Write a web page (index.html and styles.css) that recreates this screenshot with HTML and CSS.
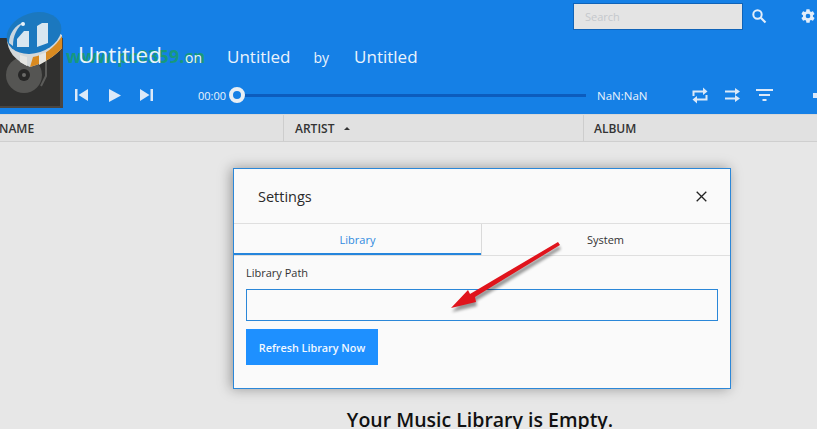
FILE: index.html
```html
<!DOCTYPE html>
<html lang="en">
<head>
    <meta charset="UTF-8">
    <meta name="viewport" content="width=device-width, initial-scale=1.0">
    <title>Music Library</title>
    <link rel="stylesheet" href="styles.css">
</head>
<body>
    <header class="player">
        <div class="top-bar">
            <div class="search-box">Search</div>
            <svg class="search-icon" width="16" height="16" viewBox="0 0 16 16"><circle cx="6.5" cy="6.5" r="4.2" fill="none" stroke="#e4eefa" stroke-width="2"/><path d="M9.8 9.8L14.5 14.5" stroke="#e4eefa" stroke-width="2.2"/></svg>
            <svg class="gear-icon" width="16" height="16" viewBox="0 0 24 24"><path fill="#e4eefa" fill-rule="evenodd" d="M19.4 13c.04-.3.06-.65.06-1s-.02-.7-.07-1l2.1-1.65c.2-.15.25-.42.13-.64l-2-3.46c-.12-.22-.4-.3-.6-.22l-2.5 1c-.52-.4-1.08-.73-1.7-.98l-.37-2.65A.5.5 0 0 0 14 2h-4a.5.5 0 0 0-.5.42l-.37 2.65c-.62.25-1.18.58-1.7.98l-2.5-1c-.22-.08-.48 0-.6.22l-2 3.46c-.13.22-.07.49.12.64L4.6 11c-.05.3-.1.65-.1 1s.03.7.08 1l-2.1 1.65c-.2.15-.25.42-.13.64l2 3.46c.12.22.4.3.6.22l2.5-1c.52.4 1.08.73 1.7.98l.37 2.65c.05.24.25.4.5.4h4c.25 0 .45-.16.5-.42l.37-2.65c.62-.25 1.18-.58 1.7-.98l2.5 1c.22.08.48 0 .6-.22l2-3.46c.12-.22.07-.49-.12-.64L19.4 13zM12 15.5a3.5 3.5 0 1 1 0-7 3.5 3.5 0 0 1 0 7z"/></svg>
        </div>
        <div class="now-playing">
            <div class="album-art">
                <svg width="63" height="70" viewBox="0 0 63 70">
                    <rect width="63" height="70" fill="#30302f"/>
                    <path d="M60 0H63V70H0V68H60z" fill="#4a4540"/>
                    <circle cx="24" cy="37" r="18" fill="#555553"/>
                    <circle cx="24" cy="37" r="6" fill="#262626"/>
                    <circle cx="24" cy="37" r="2" fill="#6a6a68"/>
                    <path d="M46 18V38L41 48" fill="none" stroke="#5c5c5a" stroke-width="2"/>
                </svg>
            </div>
            <div class="track-info">
                <div class="titles">
                    <span class="song-title">Untitled</span>
                    <span class="joiner joiner-on">on</span>
                    <span class="sub-title">Untitled</span>
                    <span class="joiner joiner-by">by</span>
                    <span class="sub-title">Untitled</span>
                </div>
                <div class="controls">
                    <svg class="ctl-prev" width="13" height="12" viewBox="0 0 13 12"><path fill="#dce9f8" d="M0 0H2.5V12H0zM13 0V12L3.5 6z"/></svg>
                    <svg class="ctl-play" width="12" height="13" viewBox="0 0 12 13"><path fill="#dce9f8" d="M0 0L12 6.5 0 13z"/></svg>
                    <svg class="ctl-next" width="13" height="12" viewBox="0 0 13 12"><path fill="#dce9f8" d="M13 0H10.5V12H13zM0 0V12L9.5 6z"/></svg>
                    <span class="time time-now">00:00</span>
                    <div class="seek">
                        <div class="seek-knob"></div>
                        <div class="seek-track"></div>
                    </div>
                    <span class="time time-end">NaN:NaN</span>
                    <svg class="ctl-repeat" width="16" height="17" viewBox="0 0 16 17"><path fill="none" stroke="#dce9f8" stroke-width="2" d="M1.5 9V4.5H11M14.5 8V12.5H5"/><path fill="#dce9f8" d="M11 0.5L15.5 4.5 11 8zM5 9L0.5 12.5 5 16.500z"/></svg>
                    <svg class="ctl-shuffle" width="15" height="14" viewBox="0 0 15 14"><path fill="none" stroke="#dce9f8" stroke-width="2" d="M0 3.500H11M0 10.500H11"/><path fill="#dce9f8" d="M10 0L15 3.500 10 7zM10 7L15 10.500 10 14z"/></svg>
                    <svg class="ctl-filter" width="17" height="12" viewBox="0 0 17 12"><path fill="none" stroke="#dce9f8" stroke-width="2" d="M0 1H17M3 6H14M6.500 11H10.500"/></svg>
                    <div class="volume-dot"></div>
                </div>
            </div>
        </div>
    </header>

    <div class="col-header">
        <div class="col col-name">NAME</div>
        <div class="col col-artist">ARTIST <span class="sort-caret"></span></div>
        <div class="col col-album">ALBUM</div>
    </div>

    <main class="library">
        <p class="empty-msg">Your Music Library is Empty.</p>
    </main>

    <div class="modal">
        <div class="modal-head">
            <span class="modal-title">Settings</span>
            <svg width="11" height="11" viewBox="0 0 11 11"><path d="M.7.7L10.300 10.300M10.300.7L.7 10.300" stroke="#222" stroke-width="1.300"/></svg>
        </div>
        <div class="tabs">
            <div class="tab tab-active">Library</div>
            <div class="tab">System</div>
        </div>
        <div class="modal-body">
            <label class="field-label">Library Path</label>
            <div class="path-input"></div>
            <button class="refresh-button">Refresh Library Now</button>
        </div>
    </div>

    <!-- annotation arrow -->
    <svg class="arrow" width="817" height="429" viewBox="0 0 817 429">
        <defs>
            <filter id="arrow-blur" x="-10%" y="-10%" width="120%" height="120%"><feGaussianBlur stdDeviation="1.500"/></filter>
        </defs>
        <path d="M451 308L468 290 470 294 558 242 560 245 475 297 476 302z" fill="#000" opacity=".4" filter="url(#arrow-blur)" transform="translate(1 4)"/>
        <path d="M451 308L468 290 470 294 558 242 560 245 475 297 476 302z" fill="#e0141c"/>
    </svg>

    <!-- site watermark over the player -->
    <svg class="wm-logo" width="60" height="62" viewBox="0 0 60 62">
        <path d="M2 27C2 40 10 50 25 56 40 52 50 45 57 37V24L30 8z" fill="#d3d8da"/>
        <path d="M28 46C40 44 50 36 57 25V37C50 45 40 52 25 56z" fill="#d98a20"/>
        <path d="M34 44L41 41V50L34 54zM15 44L22 46V55L15 51z" fill="#e6e6e2"/>
        <ellipse cx="29" cy="22" rx="28" ry="20" transform="rotate(-18 29 22)" fill="#1b78bf"/>
        <path d="M4 32C4 23 10 14 19 11 12 17 8 24 8 35z" fill="#c9d6e0"/>
        <path d="M12 28L19 20H24V36L12 36zM32 15L37 12H43V32L32 36z" fill="#d8e6f0"/>
        <circle cx="18" cy="13" r="2" fill="#e8f2fa"/>
    </svg>
    <span class="wm-text">www.pc0359.cn</span>
</body>
</html>
```

FILE: styles.css
```css
html, body {
    margin: 0;
    height: 100%;
}
body {
    position: relative;
    overflow: hidden;
    background: #e7e7e7;
    font-family: "Open Sans", "Noto Sans", sans-serif;
    color: #222;
}
.player {
    height: 114px;
    background: #1580e6;
    color: #eaf3fc;
    display: flex;
    flex-direction: column;
}
.top-bar {
    height: 38px;
    display: flex;
    align-items: flex-start;
    justify-content: flex-end;
}
.search-box {
    width: 157px;
    height: 25px;
    margin-top: 3px;
    padding-left: 11px;
    background: #e4e4e4;
    border: 1px solid #0f63b8;
    color: #c4c8cc;
    font-size: 11px;
    line-height: 25px;
}
.search-icon {
    margin: 8px 0 0 8px;
}
.gear-icon {
    margin: 8px 1px 0 33px;
}
.now-playing {
    display: flex;
}
.album-art {
    width: 63px;
    height: 70px;
}
.track-info {
    flex: 1;
    min-width: 0;
}
.titles {
    position: relative;
    z-index: 1;
    height: 43px;
    padding-left: 15px;
    display: flex;
    align-items: baseline;
    white-space: nowrap;
}
.song-title {
    font-size: 22.5px;
    line-height: 34px;
}
.sub-title {
    font-size: 17px;
}
.joiner {
    font-size: 14px;
}
.joiner-on {
    margin: 0 25px 0 23px;
}
.joiner-by {
    margin: 0 25px 0 23px;
}
.controls {
    height: 28px;
    display: flex;
    align-items: center;
    padding-left: 12px;
}
.controls > * {
    flex-shrink: 0;
}
.ctl-play {
    margin-left: 21px;
}
.ctl-next {
    margin-left: 19px;
}
.time {
    font-size: 11px;
}
.time-now {
    margin-left: 45px;
}
.seek {
    display: flex;
    align-items: center;
    width: 357px;
    margin-left: 3px;
}
.seek-knob {
    width: 8px;
    height: 8px;
    border: 4px solid #e8eef4;
    border-radius: 50%;
    background: #1580e6;
    flex: none;
}
.seek-track {
    flex: 1;
    height: 3px;
    background: #0c5cbd;
}
.time-end {
    margin-left: 11px;
    font-size: 11.500px;
}
.ctl-repeat {
    margin-left: 44px;
}
.ctl-shuffle {
    margin-left: 17px;
}
.ctl-filter {
    margin-left: 16px;
}
.volume-dot {
    width: 6px;
    height: 5px;
    margin-left: 40px;
    background: #dce9f8;
}
.col-header {
    height: 26px;
    display: flex;
    background: #e1e1e1;
    border-top: 1px solid #d8d8d8;
    border-bottom: 1px solid #cfcfcf;
    font-size: 12px;
    font-weight: 600;
    line-height: 27px;
    color: #333;
}
.col {
    box-sizing: border-box;
    padding-left: 11px;
}
.col-name {
    width: 284px;
    padding-left: 0;
    margin-left: -1px;
}
.col-artist {
    width: 300px;
    border-left: 1px solid #cdcdcd;
}
.col-album {
    flex: 1;
    padding-left: 10px;
    border-left: 1px solid #cdcdcd;
}
.sort-caret {
    display: inline-block;
    vertical-align: middle;
    margin: -3px 0 0 6px;
    border-left: 3px solid transparent;
    border-right: 3px solid transparent;
    border-bottom: 3px solid #333;
}
.library {
    text-align: center;
    padding-left: 143px;
}
.empty-msg {
    margin: 265px 0 0;
    font-size: 19.500px;
    font-weight: 600;
    line-height: 26px;
    color: #111;
}
.modal {
    position: absolute;
    left: 233px;
    top: 168px;
    width: 496px;
    height: 219px;
    background: #fafafa;
    border: 1px solid #2b87d8;
    box-shadow: -2px 0 12px rgba(0, 0, 0, 0.35);
}
.modal-head {
    height: 54px;
    padding: 0 23px 0 24px;
    display: flex;
    align-items: center;
    justify-content: space-between;
}
.modal-title {
    font-size: 14.500px;
    color: #2a2a2a;
}
.tabs {
    display: flex;
    height: 31px;
    border-top: 1px solid #dfdfdf;
    border-bottom: 1px solid #dfdfdf;
}
.tab {
    box-sizing: border-box;
    width: 248px;
    text-align: center;
    font-size: 11px;
    line-height: 32px;
    color: #333;
}
.tab + .tab {
    border-left: 1px solid #dadada;
}
.tab-active {
    width: 247px;
    color: #2f8ae0;
    border-bottom: 2px solid #2585dc;
    height: 31px;
}
.modal-body {
    padding: 9px 12px 0;
}
.field-label {
    display: block;
    font-size: 11px;
    line-height: 16px;
    color: #333;
}
.path-input {
    box-sizing: border-box;
    height: 32px;
    margin-top: 8px;
    border: 1px solid #2b87d8;
}
.refresh-button {
    display: block;
    width: 132px;
    height: 36px;
    margin-top: 8px;
    padding: 0;
    border: none;
    background: #1e90ff;
    color: #f2f8ff;
    font-family: inherit;
    font-size: 10.800px;
    font-weight: 600;
}
.arrow {
    position: absolute;
    left: 0;
    top: 0;
}
.wm-logo {
    position: absolute;
    left: 5px;
    top: 11px;
}
.wm-text {
    position: absolute;
    left: 66px;
    top: 46px;
    font-size: 18px;
    font-weight: 700;
    line-height: 20px;
    color: rgba(24, 160, 90, 0.75);
}
```
